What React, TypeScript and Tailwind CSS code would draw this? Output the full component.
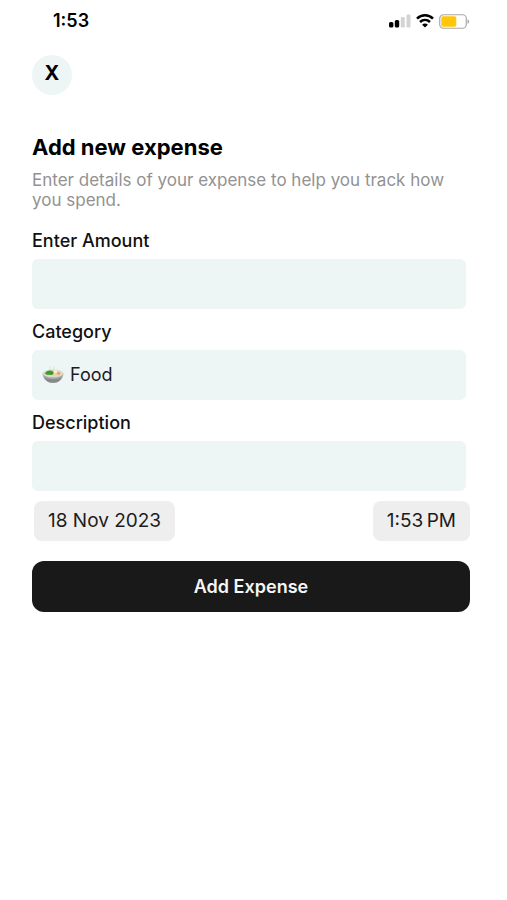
import { useState } from 'react';

const inputStyle =
  'block h-[50px] w-full rounded-md bg-[#eef5f5] px-3 text-lg text-[#1c1c1c] outline-none';
const labelStyle = 'mb-2 block text-lg leading-5 font-medium text-[#111111]';
const pillStyle = 'h-10 rounded-lg bg-[#eeeeee] px-3.5 text-[19px] text-[#1c1c1c]';

function StatusBar() {
  return (
    <div className="flex h-[42px] items-center justify-between pr-[37px] pl-[53px]">
      <span className="text-lg font-semibold">1:53</span>
      <div className="flex items-center gap-[5px]">
        <svg width="22" height="14" viewBox="0 0 22 14" aria-hidden="true">
          <rect x="0" y="8" width="4.400" height="5.500" rx="1.500" fill="#000" />
          <rect x="5.800" y="6" width="4.400" height="7.500" rx="1.500" fill="#000" />
          <rect x="11.800" y="3" width="4" height="10.500" rx="1.300" fill="#d4d4d4" />
          <rect x="17.500" y="0.500" width="4" height="13" rx="1.300" fill="#d4d4d4" />
        </svg>
        <svg width="18" height="14" viewBox="0 0 18 14" fill="none" stroke="#000" aria-hidden="true">
          <path d="M1 4.600C5.600.2 12.400.2 17 4.600" strokeWidth="2.600" />
          <path d="M4 8c2.900-2.700 7.100-2.700 10 0" strokeWidth="2.500" />
          <path d="M9 13.600 6.100 10.700c1.600-1.600 4.200-1.600 5.800 0z" fill="#000" stroke="none" />
        </svg>
        <svg width="31" height="15" viewBox="0 0 31 15" aria-hidden="true">
          <rect x="0.750" y="0.750" width="26.500" height="13.500" rx="3.600" fill="#fff" stroke="#a9a9a9" strokeWidth="1.200" />
          <rect x="2.300" y="2.300" width="15" height="10.400" rx="1.600" fill="#ffc60a" />
          <path d="M28.500 5.200c2.200.8 2.200 3.800 0 4.600z" fill="#a9a9a9" />
        </svg>
      </div>
    </div>
  );
}

function BowlIcon() {
  return (
    <svg width="22" height="22" viewBox="0 0 22 22" className="shrink-0" aria-hidden="true">
      <path d="M8 6c-1-1.500 1-2 0-4M12 6c-1-1.500 1-2 0-4" stroke="#dde3e3" fill="none" />
      <path d="M.5 9.500C1 15 5 19 11 19s10-4 10.500-9.500z" fill="#a3a7a7" />
      <path d="M2 13c3 3 15 3 18 0-1.500 3-4 5-6 5.600H8C5 17.500 3 15.500 2 13z" fill="#858989" />
      <ellipse cx="11" cy="9.500" rx="10.500" ry="4" fill="#d5d9d8" />
      <ellipse cx="11" cy="9.400" rx="8.600" ry="3" fill="#ead7a8" />
      <path d="M3 9.500c1-3 6-4 8-2 1.500 1.500 0 3.500-2 3.500-1-1-4 1-6-1.500z" fill="#3f9a2e" />
      <circle cx="13.500" cy="7.600" r="1.700" fill="#f5efd9" />
      <circle cx="16.500" cy="9.300" r="1.600" fill="#e5a962" />
    </svg>
  );
}

export default function App() {
  const [amount, setAmount] = useState('');
  const [category, setCategory] = useState('Food');
  const [description, setDescription] = useState('');

  return (
    <div className="min-h-screen bg-white font-['Inter','Liberation_Sans',sans-serif] text-black">
      <StatusBar />
      <main className="pt-[13px] pr-[37px] pl-8">
        <button
          type="button"
          aria-label="Close"
          className="flex h-10 w-10 items-center justify-center rounded-full bg-[#eef5f5] pb-1 text-xl font-bold"
        >
          X
        </button>

        <h1 className="mt-[38px] text-[22px] leading-7 font-bold">Add new expense</h1>
        <p className="mt-[9px] text-[17px] leading-5 text-[#929292]">
          Enter details of your expense to help you track how you spend.
        </p>

        <form className="mt-[21px]" onSubmit={(e) => e.preventDefault()}>
          <div className="mr-1 flex flex-col gap-[13px]">
            <div>
              <label htmlFor="amount" className={labelStyle}>Enter Amount</label>
              <input
                id="amount"
                inputMode="decimal"
                value={amount}
                onChange={(e) => setAmount(e.target.value)}
                className={inputStyle}
              />
            </div>
            <div>
              <label htmlFor="category" className={labelStyle}>Category</label>
              <div className="flex h-[50px] items-center gap-1.5 rounded-md bg-[#eef5f5] pl-2.5">
                <BowlIcon />
                <select
                  id="category"
                  value={category}
                  onChange={(e) => setCategory(e.target.value)}
                  className="h-full flex-1 appearance-none bg-transparent text-lg text-[#1c1c1c] outline-none"
                >
                  <option>Food</option>
                </select>
              </div>
            </div>
            <div>
              <label htmlFor="description" className={labelStyle}>Description</label>
              <input
                id="description"
                value={description}
                onChange={(e) => setDescription(e.target.value)}
                className={inputStyle}
              />
            </div>
          </div>

          <div className="mt-2.5 flex justify-between pl-0.5">
            <button type="button" className={pillStyle}>
              18 Nov 2023
            </button>
            <button type="button" className={pillStyle}>
              1:53{'\u2009'}PM
            </button>
          </div>

          <button
            type="submit"
            className="mt-5 h-[51px] w-full rounded-xl bg-[#191919] text-lg font-semibold text-[#f5f5f5]"
          >
            Add Expense
          </button>
        </form>
      </main>
    </div>
  );
}
